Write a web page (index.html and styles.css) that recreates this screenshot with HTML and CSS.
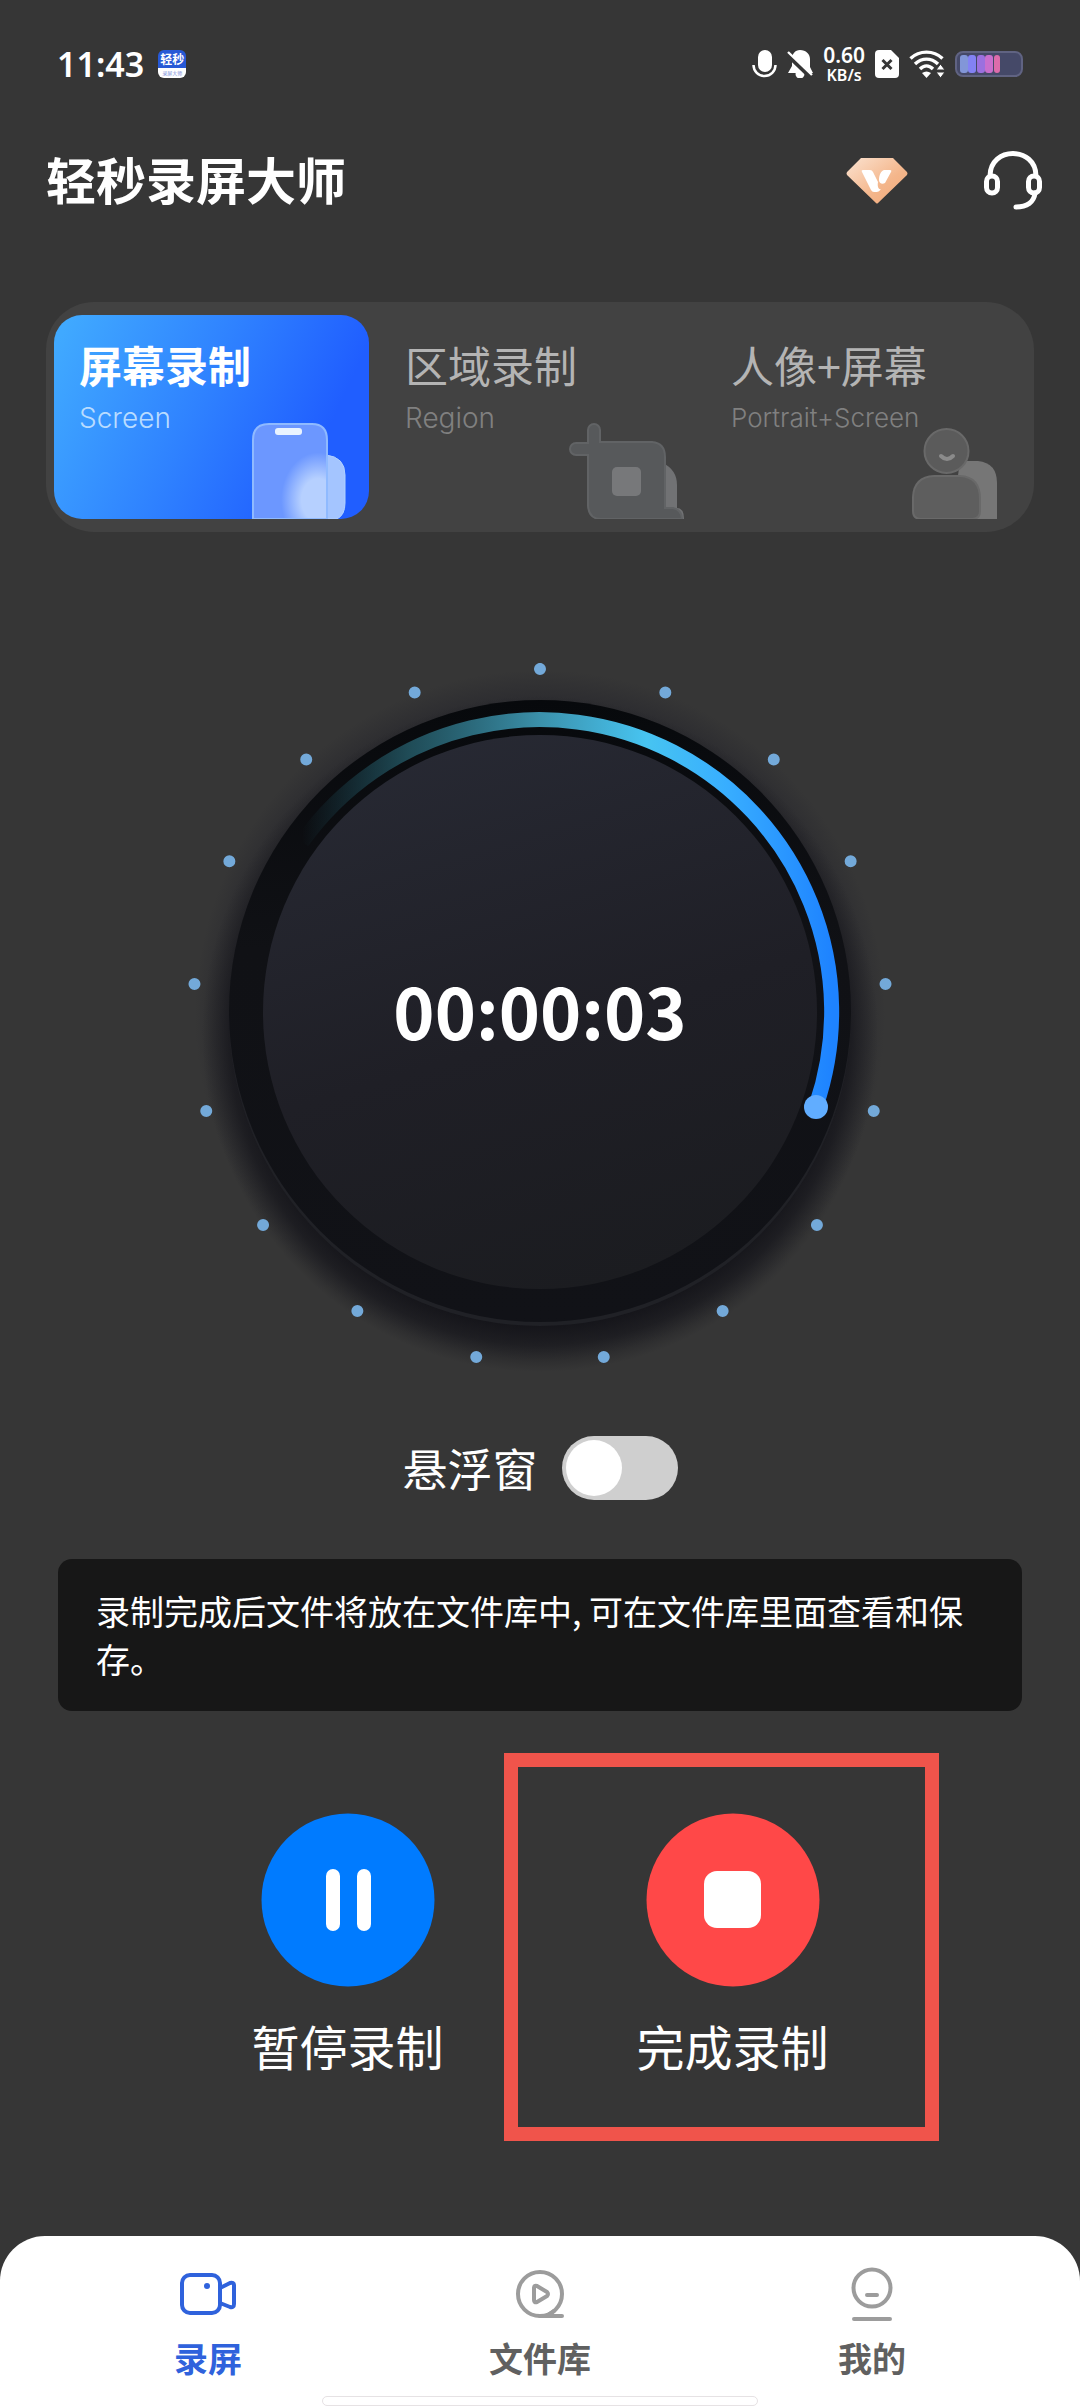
FILE: index.html
```html
<!DOCTYPE html>
<html lang="zh-CN">
<head>
<meta charset="utf-8">
<meta name="viewport" content="width=device-width, initial-scale=1">
<title>轻秒录屏大师</title>
<link rel="stylesheet" href="styles.css">
</head>
<body>
<div class="status">
  <div class="status-left">
    <span class="clock">11:43</span>
    <span class="app-badge"><b>轻秒</b><i>录屏大师</i></span>
  </div>
  <div class="status-right">
    <svg width="25" height="28" viewBox="0 0 25 28"><rect x="6" y="0" width="14" height="22" rx="7" fill="#fff"/><path d="M1.500 15a11 11 0 0 0 22 0" fill="none" stroke="#fff" stroke-width="2.500"/></svg>
    <svg width="26" height="28" viewBox="0 0 26 28"><path d="M13 0c6 0 10 4 10 9v8l3 6H1l4-7V9c0-5 3-9 8-9z" fill="#fff"/><circle cx="13" cy="24" r="4.500" fill="#fff"/><path d="M0 4l24 23" stroke="#363636" stroke-width="5"/><path d="M1 2l24 23" stroke="#fff" stroke-width="2.400"/></svg>
    <span class="speed"><span class="speed-value">0.60</span><span class="speed-unit">KB/s</span></span>
    <svg width="24" height="28" viewBox="0 0 24 28"><path d="M4 0h12l8 8v16a4 4 0 0 1-4 4H4a4 4 0 0 1-4-4V4a4 4 0 0 1 4-4z" fill="#fff"/><path d="M7.500 10l9 9m0-9l-9 9" stroke="#363636" stroke-width="3"/></svg>
    <svg width="36" height="28" viewBox="0 0 36 28"><g fill="none" stroke="#fff" stroke-width="3.400"><path d="M1.500 8.500c9-8.500 23-8.500 32 0"/><path d="M6 14c7-6.500 16-6.500 23 0"/><path d="M11 19c4-4 9-4 13 0"/></g><path d="M13 23q4.500-3 9 0l-4.500 5z" fill="#fff"/><path d="M27 20l4.500-6 4.500 6zm0 2h9l-4.500 6z" fill="#fff" stroke="#363636"/></svg>
    <svg width="68" height="26" viewBox="0 0 68 26"><rect x="1" y="1" width="66" height="24" rx="7" fill="#454968" stroke="#606382" stroke-width="2"/><rect x="5" y="4" width="8" height="18" rx="3" fill="#8296d8"/><rect x="13" y="4" width="8" height="18" rx="3" fill="#8382f4"/><rect x="22" y="4" width="8" height="18" rx="3" fill="#9b70df"/><rect x="30" y="4" width="8" height="18" rx="3" fill="#c96fcd"/><rect x="39" y="4" width="6" height="18" rx="3" fill="#dd6cab"/></svg>
  </div>
</div>

<header class="header">
  <h1 class="title">轻秒录屏大师</h1>
  <button class="icon-button" type="button" aria-label="会员">
    <svg width="62" height="48" viewBox="0 0 62 48"><defs><linearGradient id="gem" x1="0" y1="0" x2="1" y2="1"><stop offset="0" stop-color="#fbe3d1"/><stop offset=".6" stop-color="#f4b68b"/><stop offset="1" stop-color="#f2a878"/></linearGradient></defs><path d="M15 1h32l14 14q1 1.500 0 3L32 46q-1 1-2 0L1 18q-1-1.500 0-3z" fill="url(#gem)"/><path d="M17 13h7q2 0 3 2l5 10c-1 5 1 8 3 7-2 3-4 3-5 3h-2q-2 0-3-2l-9-18q-1-2 1-2zM38 13h6q2 0 1 2l-6 11c-3 2-6 0-6-3 0-5 2-9 5-10z" fill="#fff"/></svg>
  </button>
  <button class="icon-button" type="button" aria-label="客服">
    <svg width="58" height="60" viewBox="0 0 58 60" fill="none" stroke="#fff" stroke-width="5"><path d="M6 25C6-5 52-5 52 25"/><rect x="2.500" y="25" width="11" height="17" rx="5.500"/><rect x="44.500" y="25" width="11" height="17" rx="5.500"/><path d="M51 42c-1 9-8 14-19 14" stroke-linecap="round"/></svg>
  </button>
</header>

<main class="main">
  <div class="modes">
    <button class="mode mode-active" type="button">
      <span class="mode-name">屏幕录制</span><span class="mode-sub">Screen</span>
      <svg class="mode-art art-phone" width="94" height="96" viewBox="0 0 94 96"><defs><radialGradient id="glow" cx=".88" cy=".8" r=".5"><stop offset=".45" stop-color="#b6d0ff"/><stop offset="1" stop-color="#6c97ff"/></radialGradient></defs><path d="M60 32h14q19 2 19 20v28q0 12-8 16H60z" fill="#a4c5ff" stroke="#b0d1ff"/><path d="M1 96V17Q1 1 17 1h43q15 0 15 16v79z" fill="url(#glow)" stroke="#8fbaff" stroke-width="2"/><rect x="23" y="5" width="27" height="7" rx="3" fill="#e9f3ff"/></svg>
    </button>
    <button class="mode" type="button">
      <span class="mode-name">区域录制</span><span class="mode-sub">Region</span>
      <svg class="mode-art art-crop" width="116" height="96" viewBox="0 0 116 96"><path d="M94 40q14 7 14 22v23q7 0 7 11H80z" fill="#717274"/><path d="M19 20V7a6 6 0 0 1 12 0v12h52q13 1 13 15v51h8q9 2 9 11H32q-12 0-13-13V32H7a6 6 0 0 1 0-12z" fill="#57595b" stroke="#616365" stroke-width="2"/><rect x="43" y="44" width="29" height="29" rx="5" fill="#77787a"/></svg>
    </button>
    <button class="mode" type="button">
      <span class="mode-name">人像+屏幕</span><span class="mode-sub mode-sub-small">Portrait+Screen</span>
      <svg class="mode-art art-person" width="86" height="92" viewBox="0 0 86 92"><path d="M48 34h18q19 2 19 22v36H40z" fill="#767676"/><path d="M22 49h26q20 1 20 23v12q0 8-8 8H9q-8 0-8-8V70q1-20 21-21z" fill="#5e5e5e" stroke="#696969" stroke-width="2"/><circle cx="34.500" cy="24" r="22" fill="#5b5b5b" stroke="#696969" stroke-width="2"/><path d="M29 29q6 6 12 0" fill="none" stroke="#8b8b8b" stroke-width="4" stroke-linecap="round"/></svg>
    </button>
  </div>

  <div class="dial">
    <svg class="dial-face" viewBox="0 0 740 740" aria-hidden="true">
      <defs>
        <linearGradient id="disc" x1=".3" y1="0" x2=".6" y2="1"><stop offset="0" stop-color="#272933"/><stop offset=".55" stop-color="#1f1f26"/><stop offset="1" stop-color="#1b1c20"/></linearGradient>
        <linearGradient id="arc" gradientUnits="userSpaceOnUse" x1="132" y1="0" x2="662" y2="0"><stop offset="0" stop-color="#235b6b" stop-opacity="0"/><stop offset=".2" stop-color="#27616f" stop-opacity=".75"/><stop offset=".45" stop-color="#3b91ab"/><stop offset=".65" stop-color="#47c4f1"/><stop offset=".8" stop-color="#38aeff"/><stop offset="1" stop-color="#1e83ff"/></linearGradient>
        <linearGradient id="track" x1="0" y1="0" x2="0" y2="1"><stop offset="0" stop-color="#07090c"/><stop offset=".4" stop-color="#101115"/><stop offset="1" stop-color="#111217"/></linearGradient>
        <radialGradient id="halo"><stop offset=".88" stop-color="#29292e"/><stop offset="1" stop-color="#29292e" stop-opacity="0"/></radialGradient>
        <radialGradient id="shade"><stop offset=".84" stop-color="#121217"/><stop offset=".92" stop-color="#16161b" stop-opacity=".7"/><stop offset="1" stop-color="#1c1c20" stop-opacity="0"/></radialGradient>
      </defs>
      <circle cx="370" cy="375" r="345" fill="url(#halo)"/>
      <circle cx="370" cy="394" r="338" fill="url(#shade)"/>
      <circle cx="370" cy="375" r="311" fill="#202126"/>
      <circle cx="370" cy="371" r="311" fill="url(#track)"/>
      <circle cx="370" cy="372" r="277" fill="url(#disc)"/>
      <path d="M132 202A292 292 0 0 1 646 466" fill="none" stroke="url(#arc)" stroke-width="15"/>
      <circle cx="646" cy="467" r="12" fill="#61adff"/>
      <circle cx="370" cy="376" r="347" fill="none" stroke="#73a9d9" stroke-width="12" stroke-linecap="round" pathLength="1700" stroke-dasharray="0 100" transform="rotate(-90 370 376)"/>
    </svg>
    <time class="timer">00:00:03</time>
  </div>

  <label class="float">悬浮窗<input class="switch" type="checkbox" role="switch"></label>

  <p class="notice">录制完成后文件将放在文件库中, 可在文件库里面查看和保存。</p>

  <div class="actions">
    <button class="action" type="button">
      <svg width="174" height="174" viewBox="0 0 174 174"><circle cx="87" cy="87" r="86.500" fill="#007bff"/><rect x="65" y="56" width="14" height="62" rx="7" fill="#fff"/><rect x="96" y="56" width="14" height="62" rx="7" fill="#fff"/></svg>
      暂停录制
    </button>
    <button class="action action-marked" type="button">
      <svg width="174" height="174" viewBox="0 0 174 174"><circle cx="87" cy="87" r="86.500" fill="#ff4848"/><rect x="58" y="58" width="57" height="57" rx="13" fill="#fff"/></svg>
      完成录制
    </button>
  </div>
</main>

<nav class="tabs">
  <a class="tab tab-active" href="#record">
    <svg width="60" height="56" viewBox="0 0 60 56" fill="none" stroke="#2f62dc" stroke-width="4" stroke-linejoin="round"><rect x="4" y="9" width="38" height="38" rx="8"/><path d="M42 22l10-5q4-1 4 2v19q0 4-4 3l-10-4"/><circle cx="29" cy="20" r="3" fill="#2f62dc" stroke="none"/></svg>
    录屏
  </a>
  <a class="tab" href="#files">
    <svg width="60" height="56" viewBox="0 0 60 56" fill="none" stroke="#9c9c9c" stroke-width="4" stroke-linecap="round" stroke-linejoin="round"><circle cx="30" cy="28" r="22"/><path d="M30 50h22M44 45l-6 4M24 22q0-3 3-2l10 6q2 2 0 4l-10 6q-3 1-3-2z"/></svg>
    文件库
  </a>
  <a class="tab" href="#me">
    <svg width="60" height="56" viewBox="0 0 60 56" fill="none" stroke="#9c9c9c" stroke-width="4" stroke-linecap="round"><circle cx="30" cy="22" r="18.500"/><path d="M25 29h10M12 53h36"/></svg>
    我的
  </a>
  <span class="home-bar"></span>
</nav>
</body>
</html>
```
FILE: styles.css
```css
* { box-sizing: border-box; }

body {
  margin: 0;
  min-height: 100vh;
  display: flex;
  flex-direction: column;
  background: #363636;
  color: #fff;
  font-family: "Noto Sans CJK SC", sans-serif;
}

button {
  margin: 0;
  padding: 0;
  border: 0;
  background: none;
  color: inherit;
  font: inherit;
}

svg { display: block; flex: none; }

.status {
  display: flex;
  justify-content: space-between;
  align-items: center;
  padding: 44px 57px 0;
  height: 84px;
}

.status-left { display: flex; align-items: center; gap: 14px; }

.clock { font: 600 34px/40px "Noto Sans", sans-serif; }

.app-badge {
  width: 28px;
  height: 28px;
  border-radius: 6px;
  overflow: hidden;
  background: linear-gradient(#2759d6 66%, #fff 66%);
  display: flex;
  flex-direction: column;
  align-items: center;
}

.app-badge b { font-size: 12px; line-height: 18px; white-space: nowrap; }
.app-badge i { font-size: 5px; font-style: normal; line-height: 10px; color: #7088d8; white-space: nowrap; }

.status-right { display: flex; align-items: center; gap: 10px; }

.speed {
  display: flex;
  flex-direction: column;
  align-items: center;
  font-family: "Noto Sans", sans-serif;
  font-weight: 600;
}

.speed-value { font-size: 21px; line-height: 22px; }
.speed-unit { font-size: 16px; line-height: 18px; }

.header {
  display: flex;
  align-items: center;
  gap: 76px;
  margin: 67px 38px 0 46px;
  height: 60px;
}

.title { flex: 1; margin: 0; padding-bottom: 6px; font-size: 50px; line-height: 60px; font-weight: 700; }

.main { display: flex; flex-direction: column; align-items: center; }

.modes {
  align-self: stretch;
  display: grid;
  grid-template-columns: repeat(3, 1fr);
  gap: 11px;
  margin: 91px 46px 0;
  padding: 13px 13px 13px 8px;
  border-radius: 48px;
  background: #424242;
}

.mode {
  position: relative;
  display: flex;
  flex-direction: column;
  align-items: flex-start;
  gap: 2px;
  height: 204px;
  padding: 21px 25px;
  border-radius: 28px;
  color: #b4b4b4;
  text-align: left;
}

.mode-active { background: linear-gradient(115deg, #40a9ff 4%, #2f82ff 45%, #205eff 80%); color: #fff; }

.mode-name { font-size: 43px; line-height: 56px; }
.mode-active .mode-name { font-weight: 700; }

.mode-sub { font: 300 28px/48px Inter, sans-serif; color: #808080; }
.mode-sub-small { font-size: 26px; }
.mode-active .mode-sub { color: #b9dcff; }

.mode-art { position: absolute; bottom: 0; }
.art-phone { right: 23px; }
.art-crop { right: 10px; }
.art-person { right: 23px; }

.dial {
  display: grid;
  place-items: center;
  width: 740px;
  max-width: 100%;
  margin-top: 108px;
}

.dial-face { grid-area: 1 / 1; width: 100%; height: auto; }

.timer { grid-area: 1 / 1; font-size: 70px; line-height: 80px; font-weight: 700; }

.float {
  display: flex;
  align-items: center;
  gap: 24px;
  margin-top: 56px;
  font-size: 45px;
  line-height: 64px;
}

.switch {
  appearance: none;
  width: 116px;
  height: 64px;
  margin: 0;
  padding: 4px;
  border-radius: 32px;
  background: #cfcfcf;
}

.switch::before {
  content: "";
  display: block;
  width: 56px;
  height: 56px;
  border-radius: 50%;
  background: #fff;
}

.switch:checked { background: #007bff; }
.switch:checked::before { margin-left: auto; }

.notice {
  align-self: stretch;
  margin: 59px 58px 0;
  padding: 28px 38px;
  border-radius: 14px;
  background: #171717;
  font-size: 34px;
  line-height: 48px;
}

.actions { display: flex; gap: 185px; margin-top: 102px; }

.action {
  position: relative;
  display: flex;
  flex-direction: column;
  align-items: center;
  gap: 26px;
  width: 200px;
  font-size: 48px;
  line-height: 64px;
  white-space: nowrap;
}

.action-marked::after {
  content: "";
  position: absolute;
  inset: -60px -106px -64px -129px;
  border: 14px solid #f0544b;
}

.tabs {
  position: relative;
  display: grid;
  grid-template-columns: repeat(3, 1fr);
  height: 172px;
  margin-top: auto;
  padding: 30px 42px 0;
  border-radius: 45px 45px 0 0;
  background: #fff;
}

.tab {
  display: flex;
  flex-direction: column;
  align-items: center;
  gap: 12px;
  color: #606060;
  font-size: 34px;
  line-height: 48px;
  font-weight: 700;
  text-decoration: none;
}

.tab-active { color: #2f62dc; }

.home-bar {
  position: absolute;
  left: 50%;
  bottom: 2px;
  width: 436px;
  height: 10px;
  margin-left: -218px;
  border: 1px solid #e6e2e4;
  border-radius: 5px;
  background: #fff;
}
```
